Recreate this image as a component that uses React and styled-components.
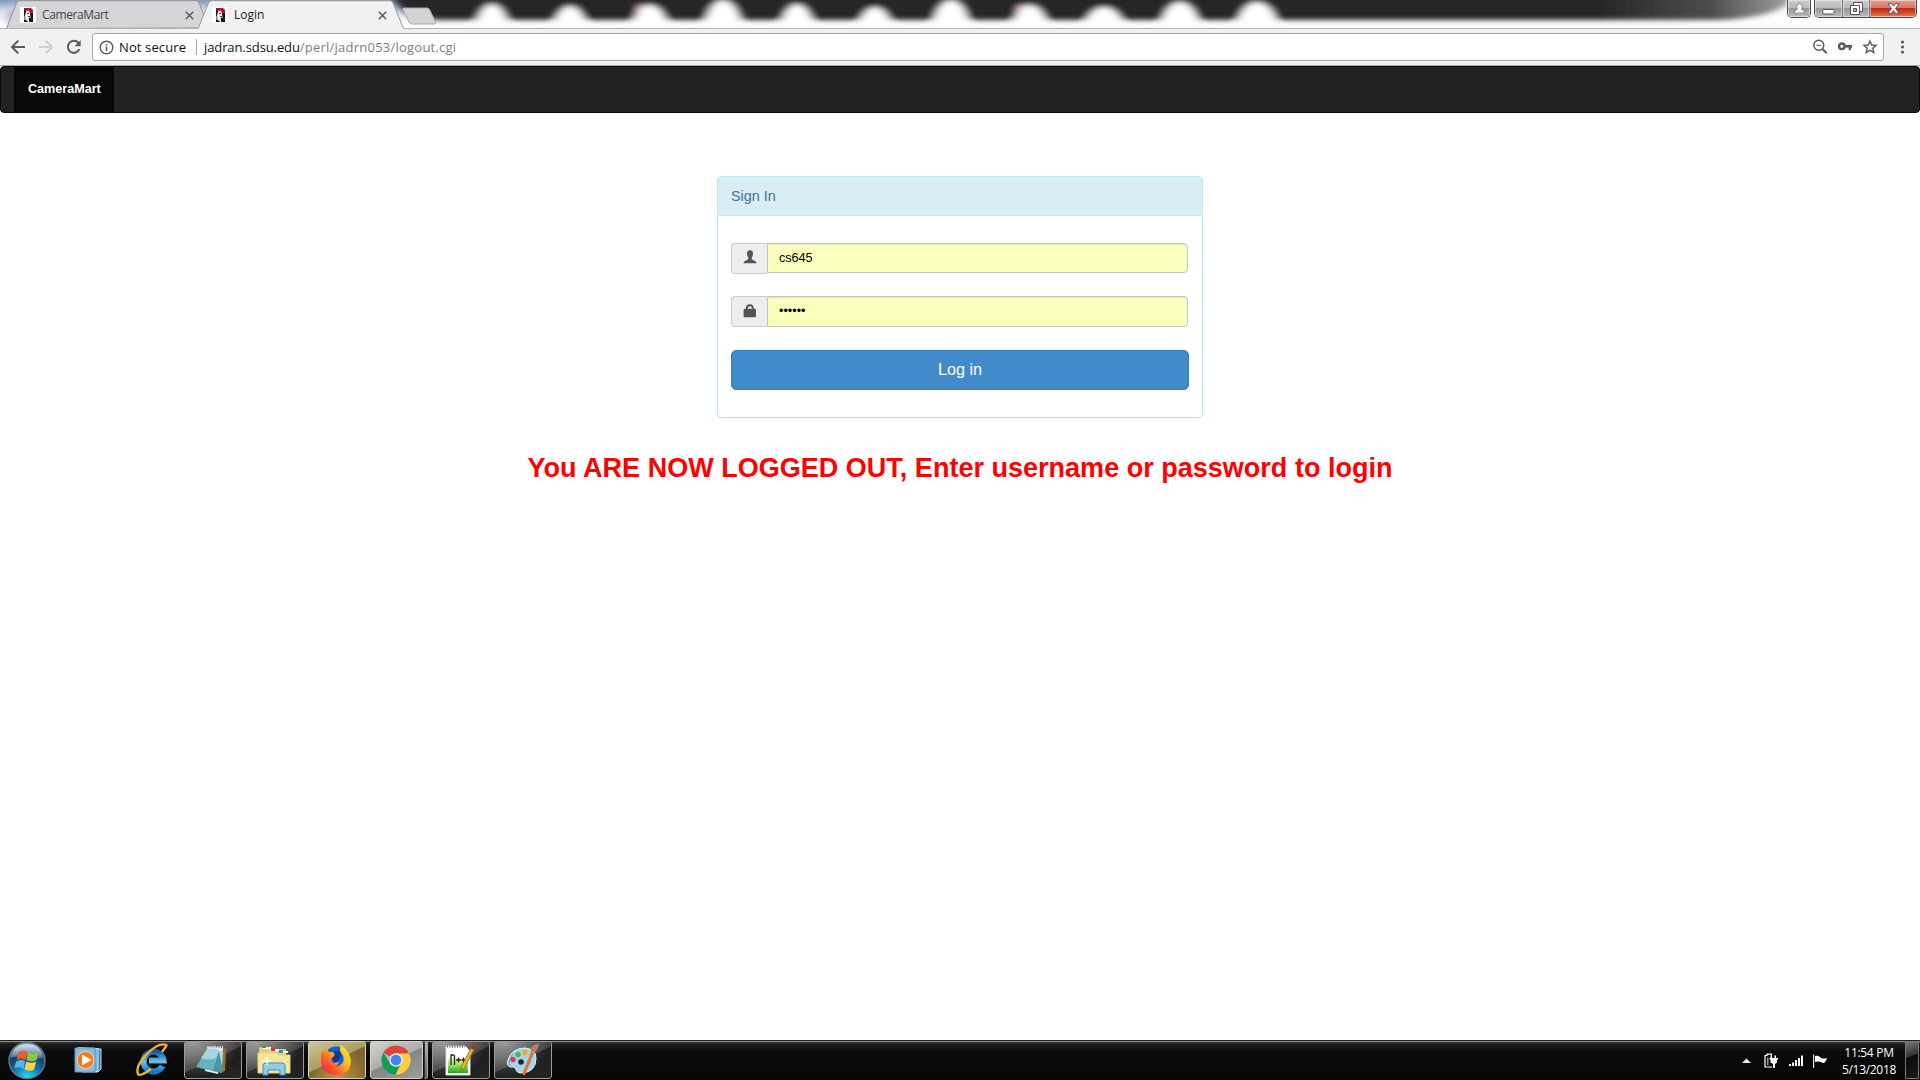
import React from "react";
import styled, { createGlobalStyle } from "styled-components";

const ui = `"Open Sans", "Noto Sans", sans-serif`;
const arial = `"Liberation Sans", Arial, sans-serif`;

const Global = createGlobalStyle`
  * { box-sizing: border-box; }
  body { margin: 0; background: #fff; overflow: hidden; }
`;

const Desktop = styled.div`
  display: flex;
  flex-direction: column;
  width: 1920px;
  height: 1080px;
  background: #fff;
`;

/* ---------- window frame ---------- */
const TitleBar = styled.header`
  position: relative;
  display: flex;
  height: 29px;
  padding-left: 6px;
  border-bottom: 1px solid #b1b1b3;
  flex: none;
`;
const Glass = styled.svg`
  position: absolute;
  left: 0;
  top: 0;
`;
const TabBox = styled.div`
  position: relative;
  display: flex;
  align-items: center;
  width: ${(p) => p.$w}px;
  height: ${(p) => (p.$active ? 29 : 28)}px;
  padding: ${(p) => (p.$active ? 1 : 2)}px 0 0 14px;
  margin-right: ${(p) => p.$overlap}px;
  z-index: ${(p) => (p.$active ? 2 : 1)};
`;
const TabShape = styled.svg`
  position: absolute;
  left: 0;
  top: 0;
`;
const TabTitle = styled.span`
  position: relative;
  flex: 1;
  margin-left: 6px;
  font: 12px/16px ${ui};
  letter-spacing: ${(p) => p.$ls}px;
  color: ${(p) => p.$color};
`;
const Raised = styled.svg`
  position: relative;
  flex: none;
  margin-right: ${(p) => p.$mr || 0}px;
`;
const NewTab = styled.svg`
  position: relative;
  flex: none;
  margin-top: 7px;
`;
const WindowButtons = styled.div`
  position: relative;
  display: flex;
  gap: 3px;
  height: 18px;
  margin: 0 3px 0 auto;
`;
const ButtonGroup = styled.div`
  display: flex;
  height: 18px;
  border: 1px solid #4b4b4b;
  border-top: 0;
  border-radius: 0 0 5px 5px;
  overflow: hidden;
  box-shadow: 0 0 2px 1px rgba(255, 255, 255, 0.75);
`;
const WinButton = styled.div`
  display: flex;
  align-items: center;
  justify-content: center;
  width: ${(p) => p.$w}px;
  padding-bottom: 1px;
  border-right: ${(p) => (p.$divider ? "1px solid #777" : "0")};
  box-shadow: inset 0 0 0 1px rgba(255, 255, 255, 0.45);
  background: ${(p) =>
    p.$close
      ? "linear-gradient(#dfa193 0, #d2796a 45%, #bd2c13 50%, #d5512f 80%, #e58c64 100%)"
      : "linear-gradient(#c9c9c9 0, #bdbdbd 45%, #979799 50%, #bdbdc1 100%)"};
`;

/* ---------- toolbar ---------- */
const Toolbar = styled.div`
  display: flex;
  align-items: center;
  height: 37px;
  padding: 0 12px 0 10px;
  background: #f1f1f1;
  border-bottom: 1px solid #acacac;
  flex: none;
`;
const NavIcons = styled.div`
  display: flex;
  gap: 12px;
  width: 82px;
`;
const Omnibox = styled.div`
  display: flex;
  align-items: center;
  width: 1792px;
  height: 28px;
  padding: 0 5px 0 6px;
  background: #fff;
  border: 1px solid #a9a9a9;
  border-radius: 3px;
`;
const Security = styled.span`
  width: 77px;
  margin-left: 5px;
  font: 13px/18px ${ui};
  letter-spacing: ${(p) => p.$ls}px;
  color: #111;
  white-space: nowrap;
`;
const Divider = styled.span`
  width: 1px;
  height: 16px;
  margin-right: 7px;
  background: #a9a9a9;
`;
const Url = styled.span`
  flex: 1;
  font: 13px/18px ${ui};
  letter-spacing: 0.23px;
  color: #808080;
`;
const Host = styled.span`
  color: #111;
  letter-spacing: -0.1px;
`;
const PageIcons = styled.div`
  display: flex;
  gap: 9px;
`;
const MenuIcon = styled.svg`
  margin-left: auto;
`;

/* ---------- page ---------- */
const Page = styled.main`
  flex: 1;
  display: flex;
  flex-direction: column;
  align-items: center;
  font-family: ${arial};
`;
const Navbar = styled.nav`
  align-self: stretch;
  display: flex;
  height: 47px;
  padding-left: 13px;
  background: #222;
  border: 1px solid #080808;
  border-radius: 4px;
`;
const Brand = styled.a`
  width: 100px;
  padding: 0 14px;
  background: #080808;
  color: #fff;
  font-size: 12.6px;
  font-weight: bold;
  line-height: 45px;
  letter-spacing: ${(p) => p.$ls}px;
`;
const Panel = styled.section`
  width: 486px;
  height: 242px;
  margin-top: 63px;
  border: 1px solid #bce8f1;
  border-radius: 4px;
  box-shadow: 0 1px 1px rgba(0, 0, 0, 0.05);
  background: #fff;
`;
const PanelHeading = styled.div`
  height: 39px;
  padding: 0 13px;
  background: #d9edf7;
  border-bottom: 1px solid #bce8f1;
  border-radius: 3px 3px 0 0;
  color: #3a7391;
  font-size: 14.4px;
  line-height: 38px;
`;
const Form = styled.form`
  display: flex;
  flex-direction: column;
  padding: 27px 13px 0;
`;
const InputGroup = styled.div`
  display: flex;
  height: 31px;
  margin-bottom: ${(p) => p.$gap}px;
`;
const Addon = styled.div`
  display: flex;
  justify-content: center;
  width: 36px;
  padding-top: ${(p) => p.$top}px;
  background: #eee;
  border: 1px solid #ccc;
  border-right: 0;
  border-radius: 4px 0 0 4px;
`;
const Field = styled.div`
  width: 421px;
  height: ${(p) => p.$h}px;
  padding-left: 11px;
  background: #faffbd;
  border: 1px solid #c6c6c0;
  border-radius: 0 4px 4px 0;
  box-shadow: inset 0 1px 1px rgba(0, 0, 0, 0.09);
  color: #000;
  font-size: 12.6px;
  line-height: ${(p) => p.$lh}px;
`;
const LoginButton = styled.button`
  width: 458px;
  height: 40px;
  padding: 0 0 2px;
  background: #428bca;
  border: 1px solid #357ebd;
  border-radius: 5px;
  color: #fff;
  font: 16.2px/36px ${arial};
`;
const Message = styled.h1`
  margin: 34px 0 0;
  color: #f00;
  font-size: 27px;
  font-weight: bold;
  line-height: 32px;
  letter-spacing: ${(p) => p.$ls}px;
  white-space: nowrap;
`;

/* ---------- taskbar ---------- */
const Taskbar = styled.footer`
  display: flex;
  align-items: stretch;
  height: 40px;
  padding-right: 1px;
  background: linear-gradient(#1f1f1f 0 1px, #8b8b8b 1px 2px, #3c3c3c 2px, #1c1c1c 4px, #0a0a0a 12px, #070707 100%);
  flex: none;
`;
const Launcher = styled.div`
  display: flex;
  align-items: center;
  justify-content: center;
  width: ${(p) => p.$w}px;
  padding-right: ${(p) => p.$pr || 0}px;
`;
const tones = {
  dark: "radial-gradient(ellipse at 15% 0, rgba(255,255,255,.4), transparent 70%), linear-gradient(155deg, #5c5c5c 0, #3e3e3e 48%, #1c1c1c 50%, #262626 100%)",
  gold: "radial-gradient(ellipse at 50% 100%, rgba(230,180,90,.6), transparent 70%), linear-gradient(155deg, #cfc79a 0, #a89b63 48%, #7c642d 50%, #8e6a2c 100%)",
  light: "linear-gradient(155deg, #d2d2d2 0, #aeaeae 48%, #858585 50%, #9d9d9d 100%)",
};
const TaskButton = styled.div`
  display: flex;
  align-items: center;
  justify-content: center;
  width: ${(p) => p.$w || 58}px;
  height: 38px;
  margin: 1px ${(p) => (p.$mr === undefined ? 4 : p.$mr)}px 0 0;
  padding: 0 2px 1px 0;
  border: 1px solid ${(p) => (p.$tone === "dark" ? "#9a9a9a" : "#d8d3bd")};
  border-radius: 3px;
  background: ${(p) => tones[p.$tone]};
`;
const StackEdge = styled.div`
  width: 4px;
  height: 38px;
  margin: 1px 4px 0 0;
  border: 1px solid #a5a5a5;
  border-left-color: #333;
  border-radius: 0 3px 3px 0;
  background: linear-gradient(#b5b5b5, #5d5d5d);
`;
const Tray = styled.div`
  display: flex;
  align-items: center;
  margin-left: auto;
  padding-top: 2px;
`;
const TrayIcon = styled.svg`
  margin-right: ${(p) => p.$mr}px;
`;
const Clock = styled.div`
  width: 60px;
  margin-right: 6px;
  text-align: center;
  color: #fff;
  font: 12px/17px ${ui};
  letter-spacing: ${(p) => p.$ls}px;
  white-space: nowrap;
`;
const ShowDesktop = styled.div`
  width: 14px;
  height: 38px;
  margin-top: 1px;
  border: 1px solid #777;
  background: linear-gradient(160deg, #777 0, #333 38%, #0b0b0b 42%, #1b1b1b 100%);
`;

const bumps = [
  [492, 5, 15], [570, 7, 15], [650, 6, 16], [723, 1, 17], [797, 5, 15],
  [875, 8, 15], [951, 1, 17], [1030, 6, 16], [1104, 8, 18], [1180, 3, 18], [1257, 3, 19],
];

function Backdrop() {
  return (
    <Glass width="1920" height="28" viewBox="0 0 1920 28">
      <defs>
        <filter id="soft" x="-5%" y="-100%" width="110%" height="300%"><feGaussianBlur stdDeviation="4 2.6" /></filter>
        <linearGradient id="strip" x2="1" y2="0">
          <stop offset="0" stopColor="#262626" /><stop offset=".86" stopColor="#262626" />
          <stop offset=".94" stopColor="#4c4c4c" /><stop offset="1" stopColor="#a5a5a5" />
        </linearGradient>
        <linearGradient id="glassLeft" x2="0" y2="1">
          <stop offset="0" stopColor="#7f9ab8" /><stop offset=".45" stopColor="#d6e0ec" /><stop offset="1" stopColor="#fff" />
        </linearGradient>
      </defs>
      <rect width="1920" height="28" fill="#fdfdfe" />
      <rect width="420" height="24" fill="url(#glassLeft)" />
      <g filter="url(#soft)">
        <rect x="8" y="10" width="12" height="14" fill="#c3a8cf" />
        <path d="M385-12H1794V-2Q1780 17 1720 20H440Q412 19 400 8Z" fill="url(#strip)" />
        <circle cx="642" cy="10" r="5" fill="#e6b5b5" />
        <circle cx="1022" cy="10" r="5" fill="#e6b5b5" />
        {bumps.map(([x, y, r]) => (
          <path key={x} d={`M${x - r - 2} 25Q${x - r + 4} ${y} ${x} ${y - 1}Q${x + r - 4} ${y} ${x + r + 2} 25Z`} fill="#fff" />
        ))}
      </g>
    </Glass>
  );
}

const Favicon = () => (
  <Raised width="16" height="16" viewBox="0 0 16 16">
    <path d="M0 0h16v16H0z" fill="#fff" />
    <path d="M4 2h8v12H4z" fill="#8d8f86" />
    <path d="M4 1h7l2 2v4H9L7 3 4 4z" fill="#b3122f" />
    <path d="M4 3h2v4l-2 3zM10 6h3v9H9v-4h2zM4 13h3l1 2H4z" fill="#1d1518" />
    <path d="M6 4.500L8.500 3.500 10 6v4L8.500 11 9 14H6.500L5 9z" fill="#f3efe6" />
    <path d="M7 6h2v1H7zM8 9h2v1H8z" fill="#4b3535" />
  </Raised>
);

const CloseX = ({ mr }) => (
  <Raised $mr={mr} width="9" height="9" viewBox="0 0 9 9" stroke="#5a5a5a" strokeWidth="1.5">
    <path d="M.8.8l7.4 7.4M8.2.8L.8 8.2" />
  </Raised>
);

const Arrow = ({ back }) => (
  <svg width="16" height="16" viewBox="0 0 16 16" fill="none" stroke={back ? "#5a5a5a" : "#d0d0d0"} strokeWidth="2">
    <path d={back ? "M15 8H2.4M8.3 1.6L2 8l6.3 6.4" : "M1 8h12.6M7.7 1.6L14 8l-6.3 6.4"} />
  </svg>
);

function Browser() {
  return (
    <>
      <TitleBar>
        <Backdrop />
        <TabBox $w={201} $overlap={-9}>
          <TabShape width="201" height="28" viewBox="0 0 201 28">
            <path d="M.5 28.5L10.5 3Q11.5.7 14 .7H190Q192 .7 193 3L201 22l-3 6z" fill="#d5d5d7" stroke="#949494" />
          </TabShape>
          <Favicon />
          <TabTitle $color="#444" $ls={-0.4}>CameraMart</TabTitle>
          <CloseX mr={13} />
        </TabBox>
        <TabBox $w={206} $active $overlap={-3}>
          <TabShape width="207" height="29" viewBox="0 0 207 29">
            <path d="M0 29L10.5 3Q11.5.7 14 .7H192Q194 .7 195 3L205.500 28v1z" fill="#f1f1f1" />
            <path d="M0 28.500L10.500 3Q11.500.7 14 .7H192Q194 .7 195 3L205.500 28.500" fill="none" stroke="#999" />
          </TabShape>
          <Favicon />
          <TabTitle $color="#222" $ls={0}>Login</TabTitle>
          <CloseX mr={17} />
        </TabBox>
        <NewTab width="36" height="18" viewBox="0 0 36 18">
          <path d="M2.500 1H26Q28 1 28.800 3L34.500 15Q35 17 33.500 17H11Q9 17 8 15L2 3Q1 1 2.500 1z" fill="#d4d4d4" stroke="#aaa" />
        </NewTab>
        <WindowButtons>
          <ButtonGroup>
            <WinButton $w={22}>
              <svg width="11" height="11" viewBox="0 0 11 11" fill="#f5f5f5" stroke="#7b7b7b" strokeWidth=".8">
                <path d="M.8 10.200V8.500Q.8 6.800 3.500 6.400Q2.700 5.200 2.700 3.500Q2.700.7 5.500.7T8.300 3.500Q8.300 5.200 7.500 6.400Q10.200 6.800 10.200 8.500v1.700z" />
              </svg>
            </WinButton>
          </ButtonGroup>
          <ButtonGroup>
            <WinButton $w={28} $divider>
              <svg width="13" height="14" viewBox="0 0 13 14"><rect x=".8" y="8.500" width="11.400" height="4.500" rx="1" fill="#fff" stroke="#53535f" /></svg>
            </WinButton>
            <WinButton $w={27} $divider>
              <svg width="13" height="13" viewBox="0 0 13 13" fill="#fff" stroke="#53535f">
                <path d="M3.500.5h9v9h-9z" /><path d="M.5 3.500h9v9h-9z" /><path d="M3.500 6.500h3v3h-3z" fill="#aaa" />
              </svg>
            </WinButton>
            <WinButton $w={46} $close>
              <svg width="13" height="11" viewBox="0 0 13 11">
                <path d="M1 .7h3.500l2 2.500 2-2.500H12L8.500 5.500l3.500 4.800H8.500l-2-2.600-2 2.600H1l3.500-4.800z" fill="#fff" stroke="#56485a" strokeWidth=".9" />
              </svg>
            </WinButton>
          </ButtonGroup>
        </WindowButtons>
      </TitleBar>
      <Toolbar>
        <NavIcons>
          <Arrow back />
          <Arrow />
          <svg width="16" height="16" viewBox="0 0 16 16">
            <path d="M13.400 10.200A6 6 0 1 1 12.300 3.800" fill="none" stroke="#5a5a5a" strokeWidth="2" />
            <path d="M14.700 1v6.200H8.500z" fill="#5a5a5a" />
          </svg>
        </NavIcons>
        <Omnibox>
          <svg width="15" height="15" viewBox="0 0 15 15">
            <circle cx="7.500" cy="7.500" r="6.300" fill="none" stroke="#5a5a5a" strokeWidth="1.400" />
            <path d="M6.700 6.500h1.600v4.500H6.700zM6.700 4h1.600v1.500H6.700z" fill="#5a5a5a" />
          </svg>
          <Security $ls={0.12}>Not secure</Security>
          <Divider />
          <Url><Host>jadran.sdsu.edu</Host>/perl/jadrn053/logout.cgi</Url>
          <PageIcons>
            <svg width="16" height="16" viewBox="0 0 16 16" fill="none" stroke="#5a5a5a">
              <circle cx="6.800" cy="6.300" r="5" strokeWidth="1.400" /><path d="M4.300 6.300h5" /><path d="M10.500 10l4.200 4.200" strokeWidth="2" />
            </svg>
            <svg width="16" height="16" viewBox="0 0 16 16" fill="none" stroke="#5a5a5a">
              <circle cx="4.800" cy="7.300" r="2.800" strokeWidth="2.400" /><path d="M7.500 7.300H15" strokeWidth="2.600" /><path d="M12.800 8v3.200" strokeWidth="2.200" />
            </svg>
            <svg width="16" height="16" viewBox="0 0 16 16">
              <path d="M8 2l1.700 4 4.400.4-3.300 2.900 1 4.200L8 11.300l-3.800 2.200 1-4.200L1.900 6.400 6.300 6z" fill="none" stroke="#5a5a5a" strokeWidth="1.400" />
            </svg>
          </PageIcons>
        </Omnibox>
        <MenuIcon width="12" height="16" viewBox="0 0 12 16" fill="#5a5a5a">
          <circle cx="6.500" cy="3" r="1.600" /><circle cx="6.500" cy="8" r="1.600" /><circle cx="6.500" cy="13" r="1.600" />
        </MenuIcon>
      </Toolbar>
    </>
  );
}

function LoginPage() {
  return (
    <Page>
      <Navbar><Brand $ls={0}>CameraMart</Brand></Navbar>
      <Panel>
        <PanelHeading>Sign In</PanelHeading>
        <Form>
          <InputGroup $gap={22}>
            <Addon $top={6}>
              <svg width="14" height="14" viewBox="0 0 14 14" fill="#555">
                <path d="M7 .3Q10 .3 10 3.500Q10 6.200 8.700 7.700V9Q9 9.700 11.500 10.700Q13.600 11.500 13.600 13.200H.4Q.4 11.500 2.500 10.700Q5 9.700 5.300 9V7.700Q4 6.200 4 3.500Q4 .3 7 .3z" />
              </svg>
            </Addon>
            <Field $h={30} $lh={29}>cs645</Field>
          </InputGroup>
          <InputGroup $gap={23}>
            <Addon $top={7}>
              <svg width="14" height="14" viewBox="0 0 14 14">
                <path d="M.6 6Q.6 4.800 1.400 4.800H12.200Q13 4.800 13 6V12.200Q13 13.200 12 13.200H1.600Q.6 13.200.6 12.200z" fill="#555" />
                <path d="M3.900 6V4Q3.900 1.200 6.800 1.200T9.700 4v2" fill="none" stroke="#555" strokeWidth="2" />
              </svg>
            </Addon>
            <Field $h={31} $lh={28}>••••••</Field>
          </InputGroup>
          <LoginButton type="button">Log in</LoginButton>
        </Form>
      </Panel>
      <Message $ls={0.015}>You ARE NOW LOGGED OUT, Enter username or password to login</Message>
    </Page>
  );
}

const StartOrb = () => (
  <svg width="40" height="40" viewBox="0 0 40 40">
    <defs>
      <radialGradient id="orb" cx=".5" cy="1" r="1">
        <stop offset="0" stopColor="#2ee6ff" /><stop offset=".35" stopColor="#1280bd" /><stop offset=".65" stopColor="#163e6b" /><stop offset="1" stopColor="#7fa6c4" />
      </radialGradient>
      <linearGradient id="shine" x2="0" y2="1"><stop offset="0" stopColor="#fff" stopOpacity=".7" /><stop offset="1" stopColor="#fff" stopOpacity=".12" /></linearGradient>
    </defs>
    <circle cx="20" cy="20.500" r="18" fill="url(#orb)" stroke="#62747f" strokeWidth="1.500" />
    <path d="M4 17Q7 4 20 4T36 17Q28 22 20 19T4 17z" fill="url(#shine)" />
    <path d="M12 12Q16 9 20 12L18.500 20Q14 17.500 9.500 20z" fill="#ee5b26" />
    <path d="M21 12.500Q26 15 31.500 12L29.500 20Q25 22.500 19.700 20.300z" fill="#8fc63e" />
    <path d="M9 21.500Q14 18.500 18 21.300L16.500 28.500Q12 26 7.300 28.500z" fill="#55b6ee" />
    <path d="M19.300 21.700Q25 24 29.200 21.500L27 29.500Q22 32 17.500 29.300z" fill="#ffd33d" />
  </svg>
);
const MediaIcon = () => (
  <svg width="28" height="28" viewBox="0 0 28 28">
    <path d="M7 2l20 1v20l-3 3H8z" fill="#3d83b5" stroke="#b9def2" />
    <path d="M4 1.500l20 1v23H4z" fill="#77b5d8" stroke="#c7e6f5" />
    <path d="M1 2h20v24H1z" fill="#89bddd" stroke="#6198bd" />
    <circle cx="11.500" cy="14" r="8.500" fill="#f47920" stroke="#fbd5b0" />
    <path d="M8 8.500l9.500 5.500L8 19.500z" fill="#fff" />
  </svg>
);
const ExplorerE = () => (
  <svg width="34" height="34" viewBox="0 0 34 34">
    <defs><linearGradient id="ie" x2="0" y2="1"><stop offset="0" stopColor="#1559a0" /><stop offset=".5" stopColor="#62c3f2" /><stop offset="1" stopColor="#1279cc" /></linearGradient></defs>
    <path d="M27.500 23A10 10 0 1 1 28.500 17.500H14" fill="none" stroke="url(#ie)" strokeWidth="6" />
    <path d="M27 9Q33 1 31 2Q24-1 12 11T3 31Q5 34 16 26" fill="none" stroke="#f2b41e" strokeWidth="2.400" />
  </svg>
);
const NotepadIcon = () => (
  <svg width="34" height="32" viewBox="0 0 34 32">
    <path d="M26 4l5 1-1 22-5 2z" fill="#9a7238" />
    <path d="M13 3l15 1-5 26-13-3z" fill="#e9f3f4" />
    <path d="M12 5l12 1-7 21L1 23z" fill="#65b1c0" />
    <path d="M12 5l12 1-3 8Q13 17 6 14z" fill="#a4d4dc" />
    <path d="M24 7l4 1-1 21-10-2z" fill="#4b97a6" />
    <path d="M24 7l4 1-1 14z" fill="#b4dbe2" />
    <path d="M12 3.500h16" stroke="#d5d5d5" strokeWidth="3" strokeDasharray="1.500 1" />
  </svg>
);
const FolderIcon = () => (
  <svg width="34" height="32" viewBox="0 0 34 32">
    <path d="M2 6Q2 3 4 3h8l2 2h15v7H2z" fill="#e8cf75" />
    <path d="M5 3h9v2H5zM13 5h9v2h-9zM22 7h9v2h-9z" fill="#fff" />
    <path d="M5 2h4v2H5z" fill="#26a53c" /><path d="M14 4h4v3h-4z" fill="#d8322a" /><path d="M22 6h4v3h-4z" fill="#278ad7" />
    <path d="M1 9h19l2 2h11v18H1z" fill="#f6e59d" stroke="#ead17b" />
    <path d="M6 31V22Q6 19 9 19H25Q28 19 28 22V31H23V26H11V31z" fill="#91cdea" stroke="#3790c7" />
    <path d="M10 13v8M6 17h8" stroke="#fff" strokeWidth="1.200" />
  </svg>
);
const FirefoxIcon = () => (
  <svg width="32" height="32" viewBox="0 0 32 32">
    <defs><linearGradient id="fx" x1="1" x2="0" y2="1"><stop offset="0" stopColor="#fff143" /><stop offset=".4" stopColor="#ffb820" /><stop offset=".7" stopColor="#ff542c" /><stop offset="1" stopColor="#f10d61" /></linearGradient></defs>
    <circle cx="16" cy="14" r="11.500" fill="#075fe0" />
    <path d="M13 8Q17 6 22 8Q20 17 15 19L11 14z" fill="#123987" />
    <path d="M2 7Q3 8 4 8Q5 5 8 3Q7 6 9 8Q12 7 14 9Q16 11 12 14Q10 17 14 19Q17 18 19 18Q18 22 14 22Q20 23 23 18Q25 13 21 9Q19 4 21 1Q30 8 31 17Q30 31 16 31Q1 30 1 15Q1 10 2 7z" fill="url(#fx)" />
  </svg>
);
const ChromeIcon = () => (
  <svg width="30" height="30" viewBox="0 0 30 30">
    <path d="M15 15L2.300 7.700A14.700 14.700 0 0 1 27.700 7.700z" fill="#db4437" />
    <path d="M15 8.500H28.100A14.700 14.700 0 0 1 14.500 29.700L20.600 18z" fill="#ffcd40" />
    <path d="M2.300 7.700L9.400 18.500Q12 22 18 20.500L14.500 29.700A14.700 14.700 0 0 1 2.300 7.700z" fill="#0f9d58" />
    <circle cx="15" cy="15" r="6.700" fill="#f1f1f1" /><circle cx="15" cy="15" r="5.400" fill="#4285f4" />
  </svg>
);
const NppIcon = () => (
  <svg width="32" height="34" viewBox="0 0 32 34">
    <defs><linearGradient id="np" x2="0" y2="1"><stop offset=".25" stopColor="#fff" /><stop offset=".6" stopColor="#a5e55a" /><stop offset="1" stopColor="#22a51c" /></linearGradient></defs>
    <path d="M2 3h19l5 5v24H2z" fill="#fff" stroke="#ddd" /><path d="M4 8h20v22H4z" fill="url(#np)" />
    <path d="M3 3.500h18" stroke="#555" strokeWidth="2" strokeDasharray="1 1.500" />
    <path d="M7 22V12h2Q10.500 12 10.500 14v8M12 17h5M14.500 14.500v5M17.500 17h4M19.500 14.500v5" fill="none" stroke="#222" strokeWidth="1.300" />
    <path d="M27 5l3 1.500L20.500 25l-3.500 2 .7-4z" fill="#efae28" stroke="#80601c" strokeWidth=".7" />
    <path d="M27 5l1.500-3 3 1.500L30 6.500z" fill="#b02a25" />
  </svg>
);
const PaintIcon = () => (
  <svg width="34" height="34" viewBox="0 0 34 34">
    <path d="M3 17Q7 5 20 5Q31 6 31 15Q31 29 17 30Q11 30 11 26Q9 23 5 24Q1 22 3 17z" fill="#a3d3ef" stroke="#e6f5fc" />
    <path d="M5 23Q2 18 8 11" fill="none" stroke="#5b9dc8" /><circle cx="16" cy="19" r="2.800" fill="#182834" />
    <circle cx="8" cy="16.500" r="2.700" fill="#e13f37" /><circle cx="13" cy="11.500" r="2.700" fill="#56b546" /><circle cx="20" cy="9.500" r="2.700" fill="#f2a72d" />
    <path d="M26 9l3 1-9 22q-3 1-2-3z" fill="#d97b2a" />
    <path d="M26 9q-1-4 1-5 2-3 7-3-1 6-5 9z" fill="#b6845b" />
  </svg>
);

function Shell() {
  return (
    <Taskbar>
      <Launcher $w={54}><StartOrb /></Launcher>
      <Launcher $w={68}><MediaIcon /></Launcher>
      <Launcher $w={62} $pr={3}><ExplorerE /></Launcher>
      <TaskButton $tone="dark"><NotepadIcon /></TaskButton>
      <TaskButton $tone="dark"><FolderIcon /></TaskButton>
      <TaskButton $tone="gold"><FirefoxIcon /></TaskButton>
      <TaskButton $tone="light" $w={53} $mr={1}><ChromeIcon /></TaskButton>
      <StackEdge />
      <TaskButton $tone="dark"><NppIcon /></TaskButton>
      <TaskButton $tone="dark"><PaintIcon /></TaskButton>
      <Tray>
        <TrayIcon $mr={13} width="9" height="6" viewBox="0 0 9 6"><path d="M0 5l4.500-4.500L9 5z" fill="#e8e8e8" /></TrayIcon>
        <TrayIcon $mr={11} width="14" height="16" viewBox="0 0 14 16">
          <path d="M8 14H1V2.500H3V1.200h4.500v1.300" fill="none" stroke="#fff" strokeWidth="1.200" />
          <path d="M3 4.500h1.500V12H3z" fill="#999" />
          <path d="M6.500 2.500H8V5h2.500V2.500H12V5h2v1.500h-1V9.500l-2 1.500v4H9v-4L6.500 9.500v-3h-1V5h1z" fill="#fff" />
        </TrayIcon>
        <TrayIcon $mr={10} width="14" height="12" viewBox="0 0 14 12">
          <path d="M0 9h2v2H0zM3 7.500h2V11H3zM6 5h2v6H6zM9 3h2v8H9zM12 .5h2V11h-2z" fill="#f5f5f5" />
        </TrayIcon>
        <TrayIcon $mr={12} width="14" height="15" viewBox="0 0 14 15">
          <path d="M.6.5V14" stroke="#ddd" strokeWidth="1.200" /><path d="M2 2q3-1 5 1 1 1 1 0v1q3 1 6 0-1 4-3 5-2 0-3-1Q5 7 2 8z" fill="#fff" />
        </TrayIcon>
        <Clock $ls={-0.3}>11:54 PM<br />5/13/2018</Clock>
      </Tray>
      <ShowDesktop />
    </Taskbar>
  );
}

export default function App() {
  return (
    <Desktop>
      <Global />
      <Browser />
      <LoginPage />
      <Shell />
    </Desktop>
  );
}
